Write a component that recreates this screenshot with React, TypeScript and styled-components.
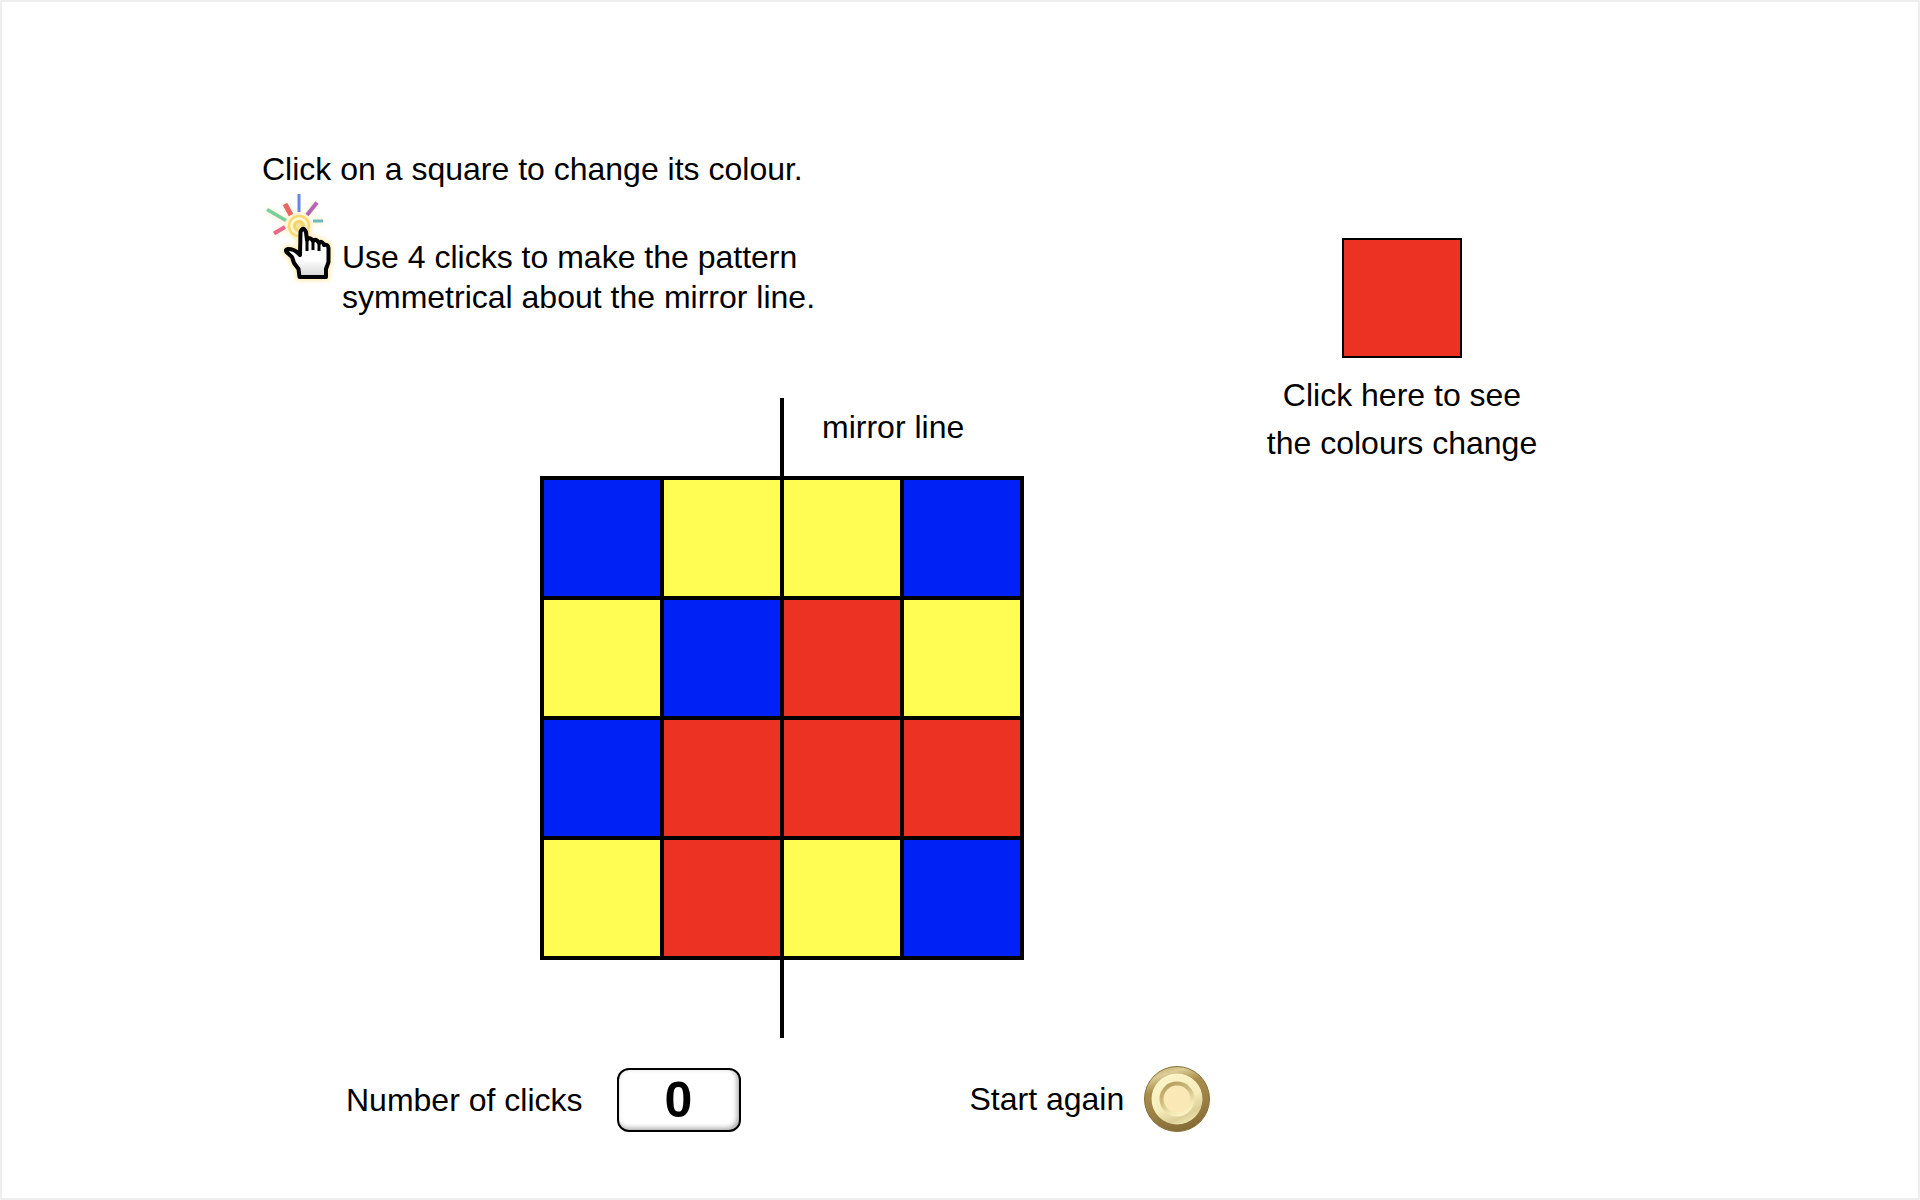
import React, { useState } from "react";
import styled, { createGlobalStyle } from "styled-components";

const COLOURS = ["#ec3323", "#fffd54", "#0021f5"];
const COLOUR_NAMES = ["red", "yellow", "blue"];

// Indexes into COLOURS, row by row.
const START = [2, 1, 1, 2, 1, 2, 0, 1, 2, 0, 0, 0, 1, 0, 1, 2];

const GlobalStyle = createGlobalStyle`
  * { box-sizing: border-box; }
  body {
    margin: 0;
    background: #fff;
    color: #000;
    font-family: "Liberation Sans", Arial, Helvetica, sans-serif;
    font-size: 32px;
    line-height: 40px;
  }
`;

const Page = styled.main`
  display: grid;
  grid-template-columns: minmax(0, 1fr) 280px;
  min-height: 100vh;
  padding: 147px 376px 60px 260px;
  border: 2px solid #eee;
`;

const Activity = styled.section`
  display: flex;
  flex-direction: column;
`;

const Text = styled.p`
  margin: 0;
`;

const Task = styled.div`
  display: grid;
  grid-template-columns: 80px auto;
  height: 128px;
  align-items: end;
`;

const HandIcon = styled.svg`
  width: 80px;
  height: 96px;
  align-self: start;
`;

const Figure = styled.figure`
  width: 484px;
  margin: 81px 0 0 278px;
`;

const MirrorRow = styled.figcaption`
  display: flex;
  gap: 38px;
  padding-left: 240px;
`;

const MirrorStub = styled.div`
  width: 4px;
  height: 78px;
  background: #000;
`;

const MirrorLabel = styled.span`
  margin-top: 9px;
  white-space: nowrap;
`;

const Board = styled.div`
  display: grid;
  grid-template-columns: repeat(4, 116px);
  grid-auto-rows: 116px;
  gap: 4px;
  padding: 4px;
  background: #000;
`;

const Square = styled.button<{ $colour: number }>`
  padding: 0;
  border: 0;
  background: ${(p) => COLOURS[p.$colour]};
  cursor: pointer;
`;

const Footer = styled.div`
  display: flex;
  align-items: flex-end;
  gap: 229px;
  margin-top: 28px;
  padding-left: 84px;
`;

const Field = styled.div<{ $gap: number }>`
  display: flex;
  align-items: center;
  gap: ${(p) => p.$gap}px;
  white-space: nowrap;
`;

const Counter = styled.output`
  display: flex;
  align-items: center;
  justify-content: center;
  width: 124px;
  height: 64px;
  border: 2px solid #000;
  border-radius: 12px;
  box-shadow: inset -2px -2px 5px #aaa;
  font-size: 50px;
  font-weight: 700;
`;

const ResetButton = styled.button`
  width: 66px;
  height: 66px;
  padding: 0;
  border: 0;
  border-radius: 50%;
  background: none;
  cursor: pointer;

  svg {
    display: block;
  }
`;

const Sampler = styled.aside`
  display: flex;
  flex-direction: column;
  align-items: center;
  gap: 13px;
  padding-top: 89px;
  text-align: center;
  line-height: 48px;
`;

const Swatch = styled(Square)`
  width: 120px;
  height: 120px;
  border: 2px solid #000;
`;

const HAND =
  "M37.500 88L36.500 80L32 74L30 68L24.500 63Q23 60.500 26 60Q32 60 36 64L38 66L38.500 43Q41 36.500 44 43L45 51Q48 47 51 52Q54 49 57 54Q60 51 62 56Q66 55 66.500 59V73L64 80V88Z";

function ClickingHand() {
  return (
    <HandIcon viewBox="0 0 80 96" fill="none" aria-hidden="true">
      <defs>
        <linearGradient id="palm" x1="0" y1="0" x2="0" y2="1">
          <stop offset="0.65" stopColor="#fff" />
          <stop offset="1" stopColor="#d4d4d4" />
        </linearGradient>
        <filter id="glow" x="-30%" y="-30%" width="160%" height="160%">
          <feGaussianBlur stdDeviation="2" />
        </filter>
      </defs>
      <g stroke="#ffe9a8" strokeWidth="5" opacity="0.6" filter="url(#glow)">
        <circle cx="37" cy="37" r="11" />
        <path d="M54.500 14L45 26M23 15L29 26M5 21L24 31.500M51 32H61M12 44.500L23 38.500" />
      </g>
      <g strokeWidth="3">
        <path d="M37 5V23" stroke="#6684ea" />
        <path d="M55 13.500L45 26" stroke="#b765b7" strokeWidth="4" />
        <path d="M23 15L29 26" stroke="#ea6660" strokeWidth="5" />
        <path d="M5 20.500L24 31.500" stroke="#78cf9f" strokeWidth="3.500" />
        <path d="M51 32H61" stroke="#6bbcbe" />
        <path d="M12 44.500L23 38" stroke="#e9698e" strokeWidth="4" />
      </g>
      <circle cx="37" cy="37" r="10" fill="#fff7d6" stroke="#f7da72" strokeWidth="2.500" />
      <circle cx="37" cy="37" r="4.500" fill="#fae69a" stroke="#f5d368" strokeWidth="3" />
      <path d={HAND} stroke="#ffe08a" strokeWidth="8" filter="url(#glow)" opacity="0.600" />
      <path
        d={HAND}
        fill="url(#palm)"
        stroke="#000"
        strokeWidth="4"
        strokeLinejoin="round"
      />
      <path d="M45 50V62M51 52V61M57 54V62" stroke="#000" strokeWidth="3" />
    </HandIcon>
  );
}

function GoldButtonFace() {
  return (
    <svg width="66" height="66" viewBox="0 0 66 66" aria-hidden="true">
      <defs>
        <linearGradient id="rim" x1="0.350" y1="0" x2="0.650" y2="1">
          <stop offset="0" stopColor="#c9b678" />
          <stop offset="0.100" stopColor="#dccd96" />
          <stop offset="0.300" stopColor="#a98d4c" />
          <stop offset="0.650" stopColor="#9a7f43" />
          <stop offset="1" stopColor="#836a34" />
        </linearGradient>
        <linearGradient id="ring" x1="0.250" y1="0" x2="0.750" y2="1">
          <stop offset="0" stopColor="#fbf5c9" />
          <stop offset="0.550" stopColor="#f6edbc" />
          <stop offset="0.820" stopColor="#dccf98" />
          <stop offset="1" stopColor="#f7edb8" />
        </linearGradient>
        <linearGradient id="groove" x1="0.250" y1="0" x2="0.750" y2="1">
          <stop offset="0" stopColor="#b39a58" />
          <stop offset="0.450" stopColor="#d3c185" />
          <stop offset="0.750" stopColor="#f3e9b5" />
          <stop offset="1" stopColor="#fdf6c9" />
        </linearGradient>
      </defs>
      <circle cx="33" cy="33" r="32.500" fill="url(#rim)" stroke="#86703a" />
      <circle cx="33" cy="33" r="25.500" fill="url(#ring)" />
      <circle cx="33" cy="33" r="17.500" fill="url(#groove)" />
      <circle cx="33" cy="33" r="13.500" fill="#fae8b6" />
    </svg>
  );
}

export default function App() {
  const [squares, setSquares] = useState(START);
  const [clicks, setClicks] = useState(0);
  const [sample, setSample] = useState(0);

  const changeSquare = (index: number) => {
    setSquares((all) => all.map((c, i) => (i === index ? (c + 1) % 3 : c)));
    setClicks((n) => n + 1);
  };

  const restart = () => {
    setSquares(START);
    setClicks(0);
  };

  return (
    <>
      <GlobalStyle />
      <Page>
        <Activity>
          <Text>Click on a square to change its colour.</Text>
          <Task>
            <ClickingHand />
            <Text>
              Use 4 clicks to make the pattern
              <br />
              symmetrical about the mirror line.
            </Text>
          </Task>
          <Figure>
            <MirrorRow>
              <MirrorStub />
              <MirrorLabel>mirror line</MirrorLabel>
            </MirrorRow>
            <Board>
              {squares.map((colour, i) => (
                <Square
                  key={i}
                  type="button"
                  $colour={colour}
                  aria-label={`Row ${Math.floor(i / 4) + 1}, column ${(i % 4) + 1}: ${COLOUR_NAMES[colour]}`}
                  onClick={() => changeSquare(i)}
                />
              ))}
            </Board>
            <MirrorRow as="div">
              <MirrorStub />
            </MirrorRow>
          </Figure>
          <Footer>
            <Field $gap={34}>
              <span id="clicks-label">Number of clicks</span>
              <Counter aria-labelledby="clicks-label">{clicks}</Counter>
            </Field>
            <Field $gap={20}>
              <label htmlFor="restart">Start again</label>
              <ResetButton id="restart" type="button" onClick={restart}>
                <GoldButtonFace />
              </ResetButton>
            </Field>
          </Footer>
        </Activity>
        <Sampler>
          <Swatch
            id="sampler"
            type="button"
            $colour={sample}
            onClick={() => setSample((c) => (c + 1) % 3)}
          />
          <label htmlFor="sampler">
            Click here to see
            <br />
            the colours change
          </label>
        </Sampler>
      </Page>
    </>
  );
}
